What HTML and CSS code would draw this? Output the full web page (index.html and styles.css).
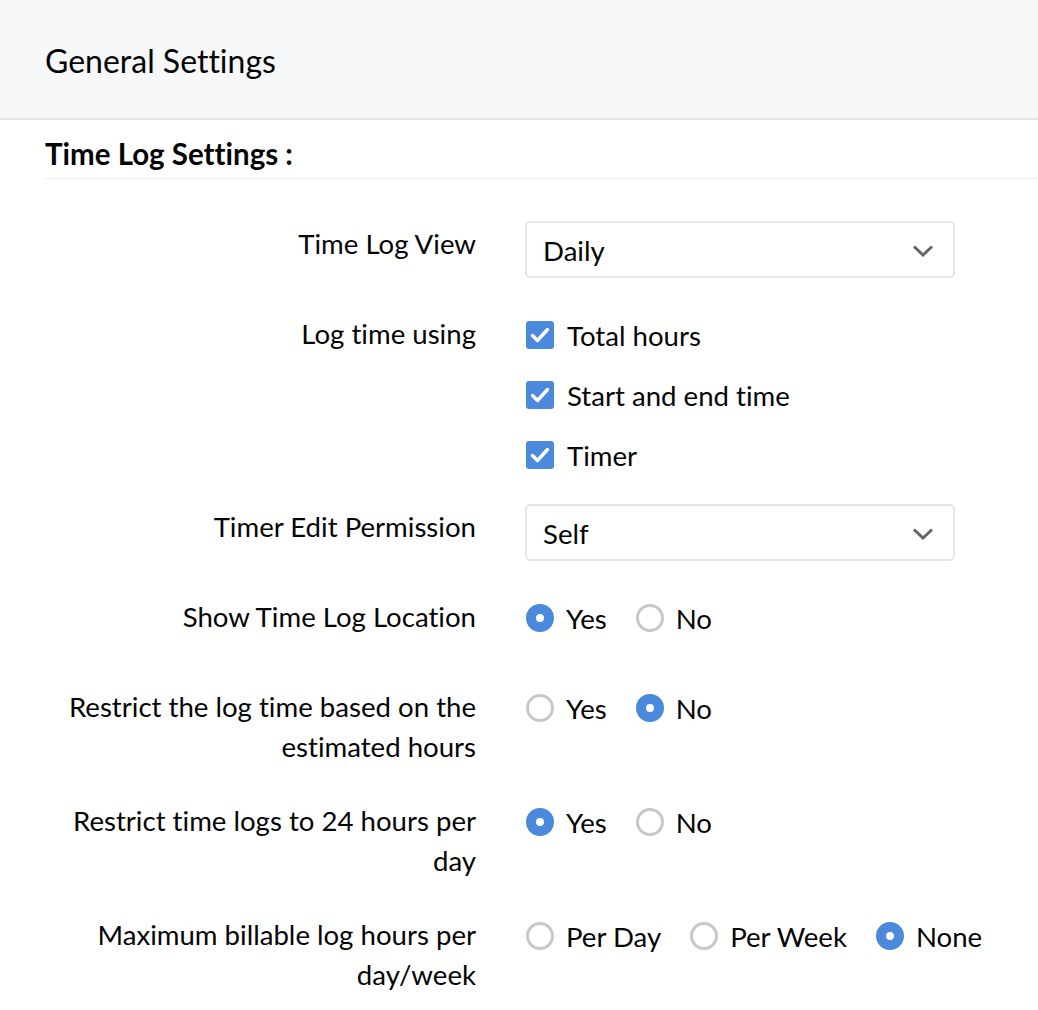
FILE: index.html
```html
<!DOCTYPE html>
<html lang="en">
<head>
  <meta charset="UTF-8" />
  <title>General Settings</title>
  <link rel="stylesheet" href="styles.css">
</head>
<body>
  <header class="page-header">
    <h1>General Settings</h1>
  </header>

  <main class="content">
    <h2 class="section-title">Time Log Settings :</h2>

    <div class="form">
      <div class="row">
        <div class="label">Time Log View</div>
        <div class="control">
          <div class="select">
            <span>Daily</span>
            <svg class="chevron" viewBox="0 0 22 12" width="22" height="12"><path d="M2 1.5 L11 10 L20 1.5" /></svg>
          </div>
        </div>
      </div>

      <div class="row">
        <div class="label">Log time using</div>
        <div class="control checks">
          <label class="option"><span class="checkbox"><svg viewBox="0 0 28 28"><path d="M6.5 14.5 L11.5 19.5 L21.5 8.5" /></svg></span>Total hours</label>
          <label class="option"><span class="checkbox"><svg viewBox="0 0 28 28"><path d="M6.5 14.5 L11.5 19.5 L21.5 8.5" /></svg></span>Start and end time</label>
          <label class="option"><span class="checkbox"><svg viewBox="0 0 28 28"><path d="M6.5 14.5 L11.5 19.5 L21.5 8.5" /></svg></span>Timer</label>
        </div>
      </div>

      <div class="row">
        <div class="label">Timer Edit Permission</div>
        <div class="control">
          <div class="select">
            <span>Self</span>
            <svg class="chevron" viewBox="0 0 22 12" width="22" height="12"><path d="M2 1.5 L11 10 L20 1.5" /></svg>
          </div>
        </div>
      </div>

      <div class="row">
        <div class="label">Show Time Log Location</div>
        <div class="control radios">
          <label class="option"><span class="radio checked"></span>Yes</label>
          <label class="option"><span class="radio"></span>No</label>
        </div>
      </div>

      <div class="row">
        <div class="label">Restrict the log time based on the estimated hours</div>
        <div class="control radios">
          <label class="option"><span class="radio"></span>Yes</label>
          <label class="option"><span class="radio checked"></span>No</label>
        </div>
      </div>

      <div class="row">
        <div class="label">Restrict time logs to 24 hours per day</div>
        <div class="control radios">
          <label class="option"><span class="radio checked"></span>Yes</label>
          <label class="option"><span class="radio"></span>No</label>
        </div>
      </div>

      <div class="row">
        <div class="label">Maximum billable log hours per day/week</div>
        <div class="control radios">
          <label class="option"><span class="radio"></span>Per Day</label>
          <label class="option"><span class="radio"></span>Per Week</label>
          <label class="option"><span class="radio checked"></span>None</label>
        </div>
      </div>
    </div>
  </main>
</body>
</html>
```

FILE: styles.css
```css
body {
  margin: 0;
  font-family: Lato, "Noto Sans", sans-serif;
  font-variant-ligatures: none;
  color: #050505;
  background: #ffffff;
}

.page-header {
  height: 118px;
  background: #f7f8fa;
  border-bottom: 2px solid #e6e6e6;
  display: flex;
  align-items: center;
  padding-left: 45px;
}

.page-header h1 {
  margin: 0;
  font-size: 32px;
  font-weight: 400;
  padding-top: 2px;
}

.content {
  padding-left: 44px;
}

.section-title {
  margin: 0;
  padding: 16px 0 6px 1px;
  font-size: 29.5px;
  font-weight: 700;
  line-height: 36px;
  border-bottom: 1px solid #f0f0f0;
}

.form {
  padding-top: 45px;
}

.row {
  display: grid;
  grid-template-columns: 432px 1fr;
  column-gap: 49px;
  min-height: 56px;
  margin-bottom: 34px;
}

.label {
  font-size: 27.6px;
  line-height: 40px;
  text-align: right;
  padding-left: 20px;
}

.control {
  font-size: 27.6px;
}

.select {
  width: 430px;
  height: 57px;
  box-sizing: border-box;
  margin-top: -3px;
  border: 2px solid #e6e6e6;
  border-radius: 5px;
  display: flex;
  align-items: center;
  justify-content: space-between;
  padding: 2px 19px 0 16px;
}

.chevron path {
  fill: none;
  stroke: #666;
  stroke-width: 3;
}

.checks {
  display: flex;
  flex-direction: column;
  gap: 24px;
  padding-top: 3px;
}

.option {
  display: flex;
  align-items: center;
  gap: 13px;
  height: 36px;
}

.checkbox {
  width: 28px;
  height: 28px;
  margin-left: 1px;
  border-radius: 3px;
  background: #4a89dc;
  display: block;
}

.checkbox svg {
  display: block;
  width: 28px;
  height: 28px;
}

.checkbox path {
  fill: none;
  stroke: #ffffff;
  stroke-width: 3.5;
  stroke-linecap: round;
  stroke-linejoin: round;
}

.radios {
  display: flex;
  gap: 28px;
  padding-top: 1px;
}

.radios .option {
  height: 40px;
  gap: 12px;
}

.radio {
  width: 28px;
  height: 28px;
  margin-left: 1px;
  box-sizing: border-box;
  border-radius: 50%;
  border: 3px solid #c8c8c8;
}

.radio.checked {
  border: 10px solid #4a89dc;
  background: #ffffff;
}
```
